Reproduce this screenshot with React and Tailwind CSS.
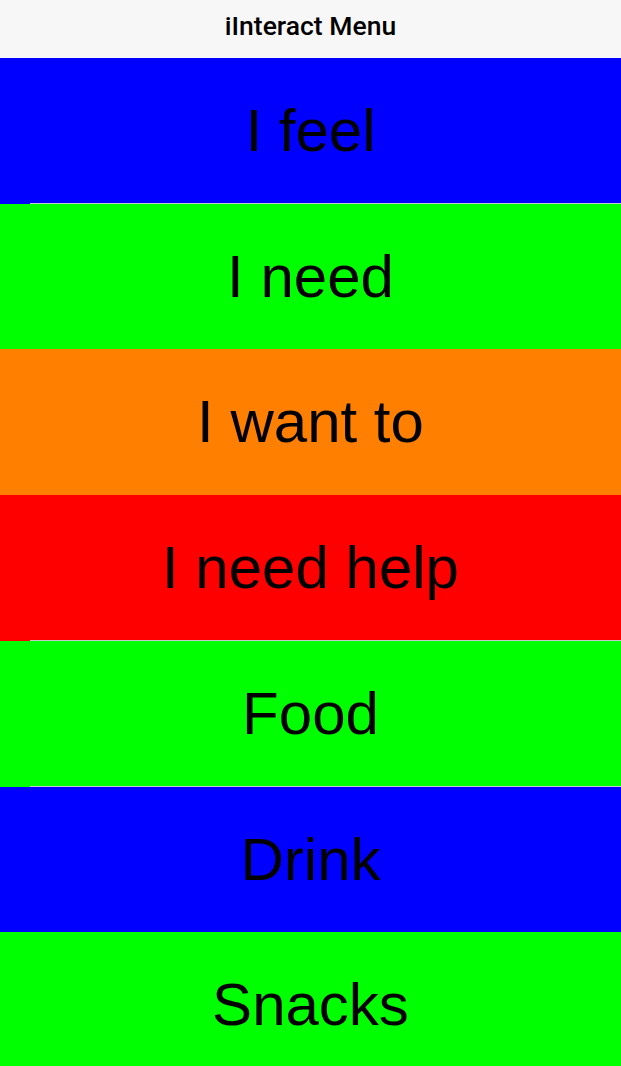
const items = [
  { label: 'I feel', bg: 'bg-[#0000ff]', h: 'h-[146px]', line: true },
  { label: 'I need', bg: 'bg-[#00ff00]', h: 'h-[145px]', line: false },
  { label: 'I want to', bg: 'bg-[#ff8000]', h: 'h-[146px]', line: false },
  { label: 'I need help', bg: 'bg-[#ff0000]', h: 'h-[146px]', line: true },
  { label: 'Food', bg: 'bg-[#00ff00]', h: 'h-[146px]', line: true },
  { label: 'Drink', bg: 'bg-[#0000ff]', h: 'h-[145px]', line: false },
  { label: 'Snacks', bg: 'bg-[#00ff00]', h: 'h-[146px]', line: false },
]

const MenuRow = ({ label, bg, h, line }) => {
  return (
    <div className={`relative flex items-center justify-center ${bg} ${h}`}>
      <span className="font-['Liberation_Sans',Arial,sans-serif] text-[60px] leading-none text-black">
        {label}
      </span>
      {line && <div className="absolute bottom-0 left-[30px] right-0 h-px bg-[#c8c7cc]" />}
    </div>
  )
}

const App = () => {
  return (
    <div className="w-[621px] h-[1066px] overflow-hidden bg-white">
      <header className="h-[58px] flex items-center justify-center pb-[6px] bg-[#f7f7f7]">
        <h1 className="font-['Roboto',sans-serif] font-medium text-[26.5px] leading-none text-black">
          iInteract Menu
        </h1>
      </header>
      {items.map((item) => (
        <MenuRow key={item.label} {...item} />
      ))}
    </div>
  )
}

export default App
